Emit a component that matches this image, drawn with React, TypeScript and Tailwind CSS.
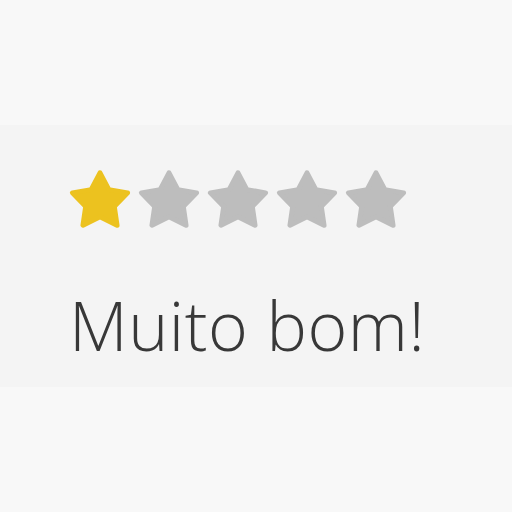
import React from "react";

// fat five-point star, corners rounded by a round-joined stroke
function starPoints(cx: number, cy: number, R: number, r: number) {
  const pts: string[] = [];
  for (let i = 0; i < 10; i++) {
    const rad = i % 2 === 0 ? R : r;
    const a = (Math.PI / 5) * i - Math.PI / 2;
    pts.push(`${(cx + rad * Math.cos(a)).toFixed(2)},${(cy + rad * Math.sin(a)).toFixed(2)}`);
  }
  return pts.join(" ");
}

const POINTS = starPoints(32, 34.8, 29, 15);

function Star({ filled }: { filled: boolean }) {
  const color = filled ? "#ecc21f" : "#bdbdbd";
  return (
    <svg width="64" height="64" viewBox="0 0 64 64" className="block">
      <polygon points={POINTS} fill={color} stroke={color} strokeWidth="5" strokeLinejoin="round" />
    </svg>
  );
}

export default function App() {
  const rating = 1;

  return (
    <div className="min-h-[512px] w-[512px] bg-[#f8f8f8]" style={{ fontFamily: '"Open Sans", sans-serif' }}>
      <div className="h-[125px]" />

      {/* Rating panel */}
      <div className="h-[262px] bg-[#f4f4f4] pl-[68px] pt-[42px]">
        <div className="flex gap-[5px]">
          {[1, 2, 3, 4, 5].map((i) => (
            <Star key={i} filled={i <= rating} />
          ))}
        </div>
        <p className="mt-[60px] pl-[1px] text-[68px] font-light leading-none tracking-[0.5px] text-[#383838]">
          Muito bom!
        </p>
      </div>
    </div>
  );
}
